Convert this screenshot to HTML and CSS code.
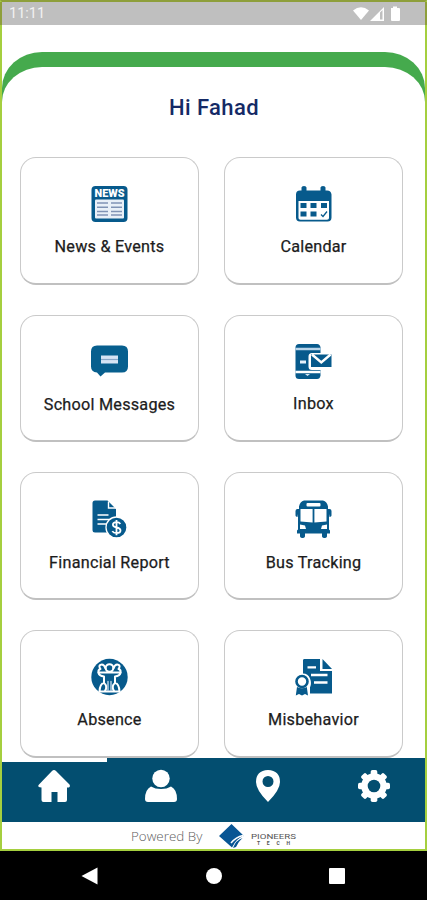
FILE: index.html
```html
<!DOCTYPE html>
<html lang="en">
<head>
<meta charset="utf-8">
<title>Pioneers Tech</title>
<link rel="stylesheet" href="styles.css">
</head>
<body>
<div class="app">
  <header class="status">
    <span class="time">11:11</span>
    <svg class="status-icons" width="48" height="16" viewBox="0 0 48 16" fill="#fff">
      <path d="M1 4.500Q9 -2 17 4.500L9 14Z"/>
      <path fill-rule="evenodd" d="M18 15L32 1V15ZM28 6.500V13.500H30.500V4Z"/>
      <path d="M39 2h2V0.500h4V2h2q1 0 1 1v11q0 1-1 1h-7q-1 0-1-1V3q0-1 0-1z"/>
    </svg>
  </header>
  <main class="main">
    <div class="arch">
      <div class="sheet">
        <h1 class="greeting">Hi Fahad</h1>
        <section class="grid">
          <a class="card">
            <svg class="icon" viewBox="0 0 37 37">
              <rect x=".5" y=".5" width="36" height="36" rx="4" fill="#075a8c"/>
              <rect x="4" y="14" width="29" height="19" rx="1" fill="#e9f0f8"/>
              <path d="M6 17.500h11M6 21.700h11M6 25.900h11M6 29.500h11M20 17.500h11M20 21.700h11M20 25.900h11M20 29.500h11" stroke="#8093b5" stroke-width="1.500"/>
              <text x="18.500" y="11.800" class="news" textLength="30" lengthAdjust="spacingAndGlyphs">NEWS</text>
            </svg>
            <span class="label">News &amp; Events</span>
          </a>
          <a class="card">
            <svg class="icon" viewBox="0 0 37 37" fill="#075a8c">
              <path d="M5 5h1.500V2q0-1.500 2.500-1.500T11.500 2v3h14V2q0-1.500 2.500-1.500T30.500 2v3H32q4 0 4.500 4v23q0 4-4 4H5q-4 0-4-4V9q0-4 4-4z"/>
              <path d="M3.500 15.500h30.500v17q0 1.800-2 1.800H5.500q-2 0-2-1.800z" fill="#fff"/>
              <path d="M5.500 17.500h6v5h-6zM15.500 17.500h6v5h-6zM26 17.500h6v5h-6zM5.500 26h6v5h-6zM15.500 26h6v5h-6z"/>
              <path d="M26 29l2 2 4-5" fill="none" stroke="#075a8c" stroke-width="1.300"/>
            </svg>
            <span class="label">Calendar</span>
          </a>
          <a class="card">
            <svg class="icon" viewBox="0 0 37 37">
              <path d="M6 2H31q6 0 6 6V23q0 6-6 6H14L9.500 33 6 29Q0 28.500 0 23V8Q0 2 6 2Z" fill="#075f8e"/>
              <rect x="10" y="12" width="17" height="8" fill="#d6e4f4"/>
              <path d="M10 16h17" stroke="#8aa8c8" stroke-width="1.200"/>
            </svg>
            <span class="label">School Messages</span>
          </a>
          <a class="card">
            <svg class="icon" viewBox="0 0 37 37">
              <path d="M4 .5H22q3 0 3.500 3.500V32q-.5 3.500-3.500 3.500H4Q.5 35.500.5 32V4Q.5.500 4 .5Z" fill="#075a8c"/>
              <path d="M.5 5.500h25" stroke="#b9d5ea" stroke-width="2.500"/>
              <path d="M.5 28.500h25" stroke="#fff" stroke-width="2.500"/>
              <path d="M5 18.500h6" stroke="#e6f1fa" stroke-width="3"/>
              <path d="M10 30.500h5l-2.500 2z" fill="#d7e8f6"/>
              <path d="M15.500 9.500H37v17H17q-3.500 0-3.500-3.500V13q0-3.500 3.500-3.500z" fill="#fff"/>
              <path d="M16 11H36.500V23.500H16Z" fill="#075a8c"/>
              <path d="M17 11l9.300 8 9.300-8" fill="none" stroke="#fff" stroke-width="2.400"/>
            </svg>
            <span class="label high">Inbox</span>
          </a>
          <a class="card">
            <svg class="icon" viewBox="0 0 37 37">
              <path d="M4 0H16.500L25 8.500V32H4Q1.500 32 1.500 29.500V2.500Q1.500 0 4 0Z" fill="#075a8c"/>
              <path d="M17.500 1v6.500H25" fill="none" stroke="#fff" stroke-width="1.400"/>
              <path d="M6.500 14.500h11M6.500 19h14M6.500 23.500h9" stroke="#fff" stroke-width="1.600"/>
              <circle cx="25.500" cy="27" r="10.500" fill="#075a8c" stroke="#fff" stroke-width="1.300"/>
              <path d="M29.300 23.500q-1-1.800-3.800-1.800-3.600 0-3.600 2.600 0 2 3.600 2.700 4 .8 4 3 0 2.600-4 2.600-3 0-4.200-2M25.500 19.500v15.200" fill="none" stroke="#fff" stroke-width="1.800"/>
            </svg>
            <span class="label low">Financial Report</span>
          </a>
          <a class="card">
            <svg class="icon" viewBox="0 0 37 37" fill="#075a8c">
              <path d="M9 0H28Q32 1 33 6V8.500h1.500q2 0 2 2V15q0 1-2 1.500l-.5-3V29l1 1v3h-3v3q-.5 1.500-2.500 1.500T27 36v-3H10v3q-.5 1.500-2.500 1.500T5 36v-3H2v-3l1-1V13.500l-.5 3Q.5 16 .5 15v-4.500q0-2 2-2H4V6Q5 1 9 0Z"/>
              <rect x="11.500" y="2.500" width="14" height="3.500" rx="1" fill="#fff"/>
              <path d="M5.500 8.500H17.600V22L5.500 21ZM19.400 8.500H31.500V21L19.400 22Z" fill="#fff"/>
              <path d="M5 24l5 1 1 3.500H5zM32 24l-5 1-1 3.500h6z" fill="#fff"/>
            </svg>
            <span class="label low">Bus Tracking</span>
          </a>
          <a class="card">
            <svg class="icon" viewBox="0 0 37 37">
              <circle cx="18.500" cy="18.500" r="18.200" fill="#075a8c"/>
              <g fill="none" stroke="#fff" stroke-width="2" stroke-linejoin="round" stroke-linecap="round">
                <circle cx="18.500" cy="9.500" r="3.800"/>
                <path d="M14.500 10Q13 5.500 10 6.200T9.500 10.500Q7 11 7.500 14M22.500 10Q24 5.500 27 6.200T27.500 10.500Q30 11 29.500 14"/>
                <path d="M7.500 14H29.500Q29 17.500 24 18V24.500Q28 25 28.500 33H8.500Q9 25 13 24.500V18Q8 17.500 7.500 14Z"/>
                <path d="M13 24.500q4 3 1 8M24 24.500q-4 3-1 8"/>
                <path d="M17 23v9M20 23v9" stroke="#bcd5ea" stroke-width="1.400"/>
              </g>
            </svg>
            <span class="label">Absence</span>
          </a>
          <a class="card">
            <svg class="icon" viewBox="0 0 37 37">
              <path d="M9 .5H25V12.500H37V35H15V29Q17 25 15 20 13 15 8 15V2Q8 .5 9 .5Z" fill="#075a8c"/>
              <path d="M27.500 .5L37 10.500H27.500Z" fill="#075a8c"/>
              <path d="M12.500 8.800H21M16 16.500H32.500M19 24H32.500" stroke="#fff" stroke-width="2.300"/>
              <circle cx="7" cy="23" r="5.500" fill="#fff" stroke="#075a8c" stroke-width="2.600"/>
              <path d="M2 28.500L.8 37 4 35.500 7 37l3-1.500 3 1.500-1.200-8.500Q7 31 2 28.500Z" fill="#075a8c"/>
            </svg>
            <span class="label">Misbehavior</span>
          </a>
        </section>
      </div>
    </div>
  </main>
  <nav class="tabs">
    <a class="tab current"><svg width="34" height="34" viewBox="0 0 34 34" fill="#fff"><path d="M17 1q1 0 2 1L32.500 15.500q1 1.500 0 2.500-.7.700-2.500.500V31q0 2-2 2h-7.500V23h-6v10H6.500q-2 0-2-2V18.500q-2 0-3-.7-.7-1.300.5-2.300L15 2q1-1 2-1z"/></svg></a>
    <a class="tab"><svg width="34" height="34" viewBox="0 0 34 34" fill="#fff"><circle cx="17" cy="9.500" r="8.700"/><path d="M7 17.500Q11 20 17 20t10-2.500Q33 20.500 33 30q0 3-3 3H4q-3 0-3-3Q1 20.500 7 17.500Z"/></svg></a>
    <a class="tab"><svg width="34" height="34" viewBox="0 0 34 34" fill="#fff"><path fill-rule="evenodd" d="M17 1Q29 1.500 29 13q0 8-12 20Q5 21 5 13 5 1.500 17 1ZM17 7a5.500 5.500 0 1 0 0 11 5.500 5.500 0 0 0 0-11z"/></svg></a>
    <a class="tab"><svg width="34" height="34" viewBox="-17 -17 34 34">
      <g fill="#fff"><circle r="12.800"/><g id="teeth"><rect x="-3.300" y="-16" width="6.600" height="32" rx="1.800"/><rect x="-16" y="-3.300" width="32" height="6.600" rx="1.800"/></g><use href="#teeth" transform="rotate(45)"/></g><circle r="6.300" fill="#034e70"/></svg></a>
  </nav>
  <footer class="powered">
    <span class="by">Powered By</span>
    <svg class="logo" width="80" height="27" viewBox="0 0 80 27">
      <path d="M13.500 2L26 14Q18.500 16 14 25.500L1 14Z" fill="#075594"/>
      <path d="M13 21Q18 15 25 13.500V15.500Q20 17 16 25" fill="none" stroke="#fff" stroke-width="1.500"/>
      <path d="M15 26Q18 18 24.500 16Q20 20 18 25Z" fill="#075594"/>
      <text x="33" y="17" class="brand" textLength="45" lengthAdjust="spacingAndGlyphs">PIONEERS</text>
      <text x="39" y="22.500" class="tech" textLength="33">TECH</text>
    </svg>
  </footer>
</div>
<div class="system">
  <svg width="18" height="20" viewBox="0 0 18 20"><path d="M0.500 10L16.500 1.500V18.500Z" fill="#fff"/></svg>
  <svg width="18" height="20" viewBox="0 0 18 20"><circle cx="9" cy="10" r="8" fill="#fff"/></svg>
  <svg width="18" height="20" viewBox="0 0 18 20"><rect x="0" y="2" width="16" height="16" rx="1" fill="#fff"/></svg>
</div>
</body>
</html>
```
FILE: styles.css
```css
* { box-sizing: border-box; }
body {
  margin: 0;
  width: 427px;
  height: 900px;
  overflow: hidden;
  background: #000;
  font-family: Roboto, "Liberation Sans", sans-serif;
}
.app {
  height: 851px;
  display: flex;
  flex-direction: column;
  border: 2px solid #a5cf3f;
  border-top-color: #8e9f3b;
  background: #fff;
}
.status {
  flex: none;
  height: 23px;
  margin: 0 -2px;
  padding: 0 25px 0 7px;
  display: flex;
  align-items: center;
  justify-content: space-between;
  background: #bfbfbf;
  border-left: 2px solid #8e9f3b;
  border-right: 2px solid #8e9f3b;
  color: #f2f2f2;
}
.time { padding-top: 1px; font-size: 14.500px; line-height: 22px; }
.status-icons { display: block; }
.main {
  flex: 1;
  min-height: 0;
  overflow: hidden;
  padding-top: 27px;
}
.arch {
  background: #45aa4d;
  border-radius: 40px 40px 0 0 / 36px 36px 0 0;
  padding-top: 15px;
}
.sheet {
  background: #fff;
  border-radius: 40px 40px 0 0 / 35px 35px 0 0;
  padding: 26px 22px 0 18px;
}
.greeting {
  margin: 0 0 34px;
  padding-left: 5px;
  text-align: center;
  font-size: 22px;
  line-height: 30px;
  font-weight: 500;
  letter-spacing: .4px;
  color: #142a66;
}
.grid {
  display: grid;
  grid-template-columns: 179px 179px;
  justify-content: space-between;
  row-gap: 30px;
}
.card {
  height: 127.700px;
  padding-top: 28px;
  display: flex;
  flex-direction: column;
  align-items: center;
  border: 1px solid #cacaca;
  border-bottom: 2px solid #c0c0c0;
  border-radius: 16px;
  background: #fff;
}
.icon { width: 37px; height: 38px; flex: none; margin-top: -1px; }
.label {
  margin-top: 14px;
  font-size: 16.200px;
  line-height: 20px;
  font-weight: 400;
  letter-spacing: .25px;
  color: #1c1c1c;
  -webkit-text-stroke: .25px #1c1c1c;
  white-space: nowrap;
}
.low { margin-top: 15px; }
.high { margin-top: 13px; }
.news {
  font: 900 11px Roboto, sans-serif;
  text-anchor: middle;
  fill: #fff;
}
.tabs {
  flex: none;
  height: 64px;
  display: grid;
  grid-template-columns: 105px 107px 107px 1fr;
  background: #034e70;
}
.tab {
  display: flex;
  justify-content: center;
  padding-top: 11px;
}
.tab:last-child { padding-left: 2px; }
.tab svg { display: block; }
.current {
  border-top: 4px solid #fff;
  padding: 7px 2px 0 0;
}
.powered {
  flex: none;
  height: 27px;
  display: flex;
  align-items: center;
  padding-left: 129px;
  gap: 14px;
}
.by {
  width: 73px;
  font: 300 13.400px "Open Sans", sans-serif;
  color: #606060;
  white-space: nowrap;
}
.logo { display: block; }
.brand { font: 8px Roboto, sans-serif; fill: #555; }
.tech { font: 700 5px Roboto, sans-serif; fill: #555; }
.system {
  height: 49px;
  display: flex;
  justify-content: center;
  align-items: center;
  gap: 106px;
}
```
